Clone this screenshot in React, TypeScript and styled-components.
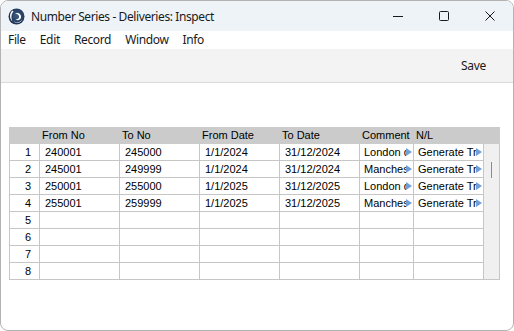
import React from "react";
import styled, { createGlobalStyle } from "styled-components";

const GlobalStyle = createGlobalStyle`
    html, body {
        margin: 0;
        padding: 0;
        background: #ffffff;
    }
    * {
        box-sizing: border-box;
    }
`;

interface Row {
    fromNo: string,
    toNo: string,
    fromDate: string,
    toDate: string,
    comment: string,
    nl: string
}

const rows: Row[] = [
    {fromNo: "240001", toNo: "245000", fromDate: "1/1/2024", toDate: "31/12/2024", comment: "London deliveries", nl: "Generate Transactions"},
    {fromNo: "245001", toNo: "249999", fromDate: "1/1/2024", toDate: "31/12/2024", comment: "Manchester deliveries", nl: "Generate Transactions"},
    {fromNo: "250001", toNo: "255000", fromDate: "1/1/2025", toDate: "31/12/2025", comment: "London deliveries", nl: "Generate Transactions"},
    {fromNo: "255001", toNo: "259999", fromDate: "1/1/2025", toDate: "31/12/2025", comment: "Manchester deliveries", nl: "Generate Transactions"},
];

const widths = [30, 80, 80, 80, 80, 54, 70];

const Logo = () => (
    <svg width="17" height="17" viewBox="0 0 34 34">
        <defs>
            <radialGradient id="lg" cx="0.55" cy="0.45" r="0.65">
                <stop offset="0" stopColor="#3f5f86" />
                <stop offset="1" stopColor="#15294a" />
            </radialGradient>
        </defs>
        <circle cx="17" cy="17" r="16" fill="url(#lg)" />
        <path d="M9 5 C3 10 2 21 9 27 C6 21 6 12 11 7 Z" fill="#ffffff" />
        <path d="M14 11 C20 8 27 12 26 19 C25 24 19 26 15 23 C20 23 23 20 22 16 C21 13 18 11 14 11 Z" fill="#ffffff" />
        <path d="M11 26 C16 31 25 29 29 22 C26 30 16 33 11 26 Z" fill="#e3eaf2" />
    </svg>
);

const App = () => {
    return (
        <>
            <GlobalStyle />
            <Window>
                <TitleBar>
                    <Logo />
                    <Title>Number Series - Deliveries: Inspect</Title>
                    <Controls>
                        <ControlButton>
                            <svg width="10" height="10" viewBox="0 0 10 10">
                                <line x1="0" y1="5.5" x2="10" y2="5.5" stroke="#1a1a1a" strokeWidth="1" />
                            </svg>
                        </ControlButton>
                        <ControlButton>
                            <svg width="10" height="10" viewBox="0 0 10 10">
                                <rect x="0.5" y="0.5" width="9" height="9" rx="1" fill="none" stroke="#1a1a1a" strokeWidth="1" />
                            </svg>
                        </ControlButton>
                        <ControlButton>
                            <svg width="10" height="10" viewBox="0 0 10 10">
                                <path d="M0.5 0.5 L9.5 9.5 M9.5 0.5 L0.5 9.5" stroke="#1a1a1a" strokeWidth="1" />
                            </svg>
                        </ControlButton>
                    </Controls>
                </TitleBar>
                <MenuBar>
                    <MenuItem>File</MenuItem>
                    <MenuItem>Edit</MenuItem>
                    <MenuItem>Record</MenuItem>
                    <MenuItem>Window</MenuItem>
                    <MenuItem>Info</MenuItem>
                </MenuBar>
                <Toolbar>
                    <ToolButton>Save</ToolButton>
                </Toolbar>
                <Content>
                    <Table>
                        <HeaderRow>
                            <HeaderCell $width={widths[0]} />
                            <HeaderCell $width={widths[1]}>From No</HeaderCell>
                            <HeaderCell $width={widths[2]}>To No</HeaderCell>
                            <HeaderCell $width={widths[3]}>From Date</HeaderCell>
                            <HeaderCell $width={widths[4]}>To Date</HeaderCell>
                            <HeaderCell $width={widths[5]}>Comment</HeaderCell>
                            <HeaderCell $width={widths[6]}>N/L</HeaderCell>
                        </HeaderRow>
                        <Body>
                            <Rows>
                                {Array.from({length: 8}).map((_, i) => {
                                    const r = rows[i];
                                    return (
                                        <DataRow key={i}>
                                            <NumCell $width={widths[0]}>{i + 1}</NumCell>
                                            <Cell $width={widths[1]}>{r?.fromNo}</Cell>
                                            <Cell $width={widths[2]}>{r?.toNo}</Cell>
                                            <Cell $width={widths[3]}>{r?.fromDate}</Cell>
                                            <Cell $width={widths[4]}>{r?.toDate}</Cell>
                                            <Cell $width={widths[5]} $tight>
                                                {r && <><Clip>{r.comment}</Clip><More /></>}
                                            </Cell>
                                            <Cell $width={widths[6]} $tight>
                                                {r && <><Clip>{r.nl}</Clip><More /></>}
                                            </Cell>
                                        </DataRow>
                                    );
                                })}
                            </Rows>
                            <ScrollTrack>
                                <ScrollThumb />
                            </ScrollTrack>
                        </Body>
                    </Table>
                </Content>
            </Window>
        </>
    );
};

const Window = styled.div`
    width: 514px;
    height: 331px;
    border: 1px solid #b3b3b3;
    border-radius: 8px;
    overflow: hidden;
    display: flex;
    flex-direction: column;
    background: #ffffff;
    font-family: "Noto Sans", "Open Sans", sans-serif;
    color: #1a1a1a;
`;
const TitleBar = styled.div`
    height: 30px;
    flex-shrink: 0;
    display: flex;
    align-items: center;
    padding-left: 7px;
    background: #eef3f8;
`;
const Title = styled.div`
    margin-left: 6px;
    font-size: 12px;
    letter-spacing: -0.4px;
    flex: 1;
    white-space: nowrap;
`;
const Controls = styled.div`
    display: flex;
    height: 100%;
`;
const ControlButton = styled.div`
    width: 46px;
    display: flex;
    align-items: center;
    justify-content: center;
    padding-bottom: 1px;
`;
const MenuBar = styled.div`
    height: 18px;
    flex-shrink: 0;
    display: flex;
    align-items: center;
    gap: 14px;
    padding-left: 7px;
    font-size: 12px;
    letter-spacing: -0.35px;
    background: #ffffff;
`;
const MenuItem = styled.div`
    line-height: 18px;
`;
const Toolbar = styled.div`
    height: 34px;
    flex-shrink: 0;
    display: flex;
    align-items: center;
    justify-content: flex-end;
    padding-right: 27px;
    background: #f3f3f4;
    border-bottom: 1px solid #dadada;
`;
const ToolButton = styled.div`
    font-size: 12px;
    letter-spacing: -0.3px;
`;
const Content = styled.div`
    flex: 1;
    padding: 44px 0 0 8px;
`;
const Table = styled.div`
    width: 491px;
    font-family: "Liberation Sans", Arial, sans-serif;
    font-size: 11px;
    color: #000000;
`;
const HeaderRow = styled.div`
    display: flex;
    height: 17px;
    background: #cbcbcb;
    border-left: 1px solid #cbcbcb;
`;
const HeaderCell = styled.div<{ $width: number }>`
    width: ${p => p.$width}px;
    flex-shrink: 0;
    padding-left: 2px;
    line-height: 17px;
    white-space: nowrap;
`;
const Body = styled.div`
    display: flex;
`;
const Rows = styled.div`
    border-left: 1px solid #c6c6c6;
`;
const DataRow = styled.div`
    display: flex;
    height: 17px;
    border-bottom: 1px solid #c6c6c6;
`;
const Cell = styled.div<{ $width: number, $tight?: boolean }>`
    width: ${p => p.$width}px;
    flex-shrink: 0;
    display: flex;
    align-items: center;
    padding-left: ${p => p.$tight ? 4 : 5}px;
    border-right: 1px solid #c6c6c6;
    white-space: nowrap;
    overflow: hidden;
`;
const NumCell = styled(Cell)`
    justify-content: flex-end;
    padding-right: 8px;
`;
const Clip = styled.span`
    flex: 1;
    min-width: 0;
    overflow: hidden;
    white-space: nowrap;
`;
const More = styled.span`
    flex-shrink: 0;
    width: 0;
    height: 0;
    margin: 0 1px 0 0;
    border-top: 4px solid transparent;
    border-bottom: 4px solid transparent;
    border-left: 6px solid #6f9fd8;
`;
const ScrollTrack = styled.div`
    width: 16px;
    background: #f0f0f0;
    border-right: 1px solid #c6c6c6;
    border-bottom: 1px solid #c6c6c6;
    padding: 18px 0 0 7px;
`;
const ScrollThumb = styled.div`
    width: 1px;
    height: 16px;
    background: #8a8a8a;
`;

export default App;
